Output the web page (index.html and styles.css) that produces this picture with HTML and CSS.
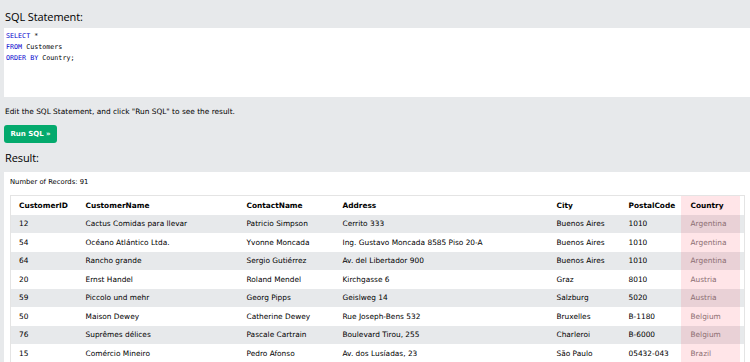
FILE: index.html
```html
<!DOCTYPE html>
<html lang="en">
<head>
    <meta charset="UTF-8">
    <meta name="viewport" content="width=device-width, initial-scale=1.0">
    <title>SQL Tryit Editor</title>
    <link rel="stylesheet" href="styles.css">
</head>
<body>
    <div class="page">
        <h3 class="heading">SQL Statement:</h3>
        <div class="code-box">
            <div><span class="kw">SELECT</span> *</div>
            <div><span class="kw">FROM</span> Customers</div>
            <div><span class="kw">ORDER BY</span> Country;</div>
        </div>
        <p class="hint">Edit the SQL Statement, and click "Run SQL" to see the result.</p>
        <button class="run-btn">Run SQL &raquo;</button>
        <h3 class="heading result-heading">Result:</h3>
        <div class="result">
            <div class="count">Number of Records: 91</div>
            <table class="records">
                <colgroup>
                    <col style="width: 67px">
                    <col style="width: 161px">
                    <col style="width: 96px">
                    <col style="width: 214px">
                    <col style="width: 72px">
                    <col style="width: 60px">
                    <col>
                </colgroup>
                <tr>
                    <th>CustomerID</th>
                    <th>CustomerName</th>
                    <th>ContactName</th>
                    <th>Address</th>
                    <th>City</th>
                    <th>PostalCode</th>
                    <th class="country">Country</th>
                </tr>
                <tr>
                    <td>12</td><td>Cactus Comidas para llevar</td><td>Patricio Simpson</td><td>Cerrito 333</td><td>Buenos Aires</td><td>1010</td><td class="country">Argentina</td>
                </tr>
                <tr>
                    <td>54</td><td>Océano Atlántico Ltda.</td><td>Yvonne Moncada</td><td>Ing. Gustavo Moncada 8585 Piso 20-A</td><td>Buenos Aires</td><td>1010</td><td class="country">Argentina</td>
                </tr>
                <tr>
                    <td>64</td><td>Rancho grande</td><td>Sergio Gutiérrez</td><td>Av. del Libertador 900</td><td>Buenos Aires</td><td>1010</td><td class="country">Argentina</td>
                </tr>
                <tr>
                    <td>20</td><td>Ernst Handel</td><td>Roland Mendel</td><td>Kirchgasse 6</td><td>Graz</td><td>8010</td><td class="country">Austria</td>
                </tr>
                <tr>
                    <td>59</td><td>Piccolo und mehr</td><td>Georg Pipps</td><td>Geislweg 14</td><td>Salzburg</td><td>5020</td><td class="country">Austria</td>
                </tr>
                <tr>
                    <td>50</td><td>Maison Dewey</td><td>Catherine Dewey</td><td>Rue Joseph-Bens 532</td><td>Bruxelles</td><td>B-1180</td><td class="country">Belgium</td>
                </tr>
                <tr>
                    <td>76</td><td>Suprêmes délices</td><td>Pascale Cartrain</td><td>Boulevard Tirou, 255</td><td>Charleroi</td><td>B-6000</td><td class="country">Belgium</td>
                </tr>
                <tr>
                    <td>15</td><td>Comércio Mineiro</td><td>Pedro Afonso</td><td>Av. dos Lusíadas, 23</td><td>São Paulo</td><td>05432-043</td><td class="country">Brazil</td>
                </tr>
            </table>
        </div>
    </div>
</body>
</html>
```

FILE: styles.css
```css
body {
    margin: 0;
    background-color: #e7e9eb;
    font-family: "DejaVu Sans", Verdana, sans-serif;
    overflow: hidden;
}

.page {
    padding: 0 0 0 4px;
}

.heading {
    font-family: "Open Sans", "Noto Sans", sans-serif;
    font-weight: 400;
    font-size: 11px;
    letter-spacing: -0.1px;
    line-height: 18px;
    margin: 0;
    padding: 8px 0 2px 1px;
    color: #000;
}

.code-box {
    background-color: #fff;
    height: 63px;
    padding: 3px 2px;
    font-family: "DejaVu Sans Mono", "Liberation Mono", monospace;
    font-size: 6.7px;
    line-height: 11px;
    color: #000;
}

.kw {
    color: mediumblue;
}

.hint {
    font-size: 7.4px;
    margin: 0;
    padding: 10px 0 8px 1px;
    line-height: 10px;
}

.run-btn {
    display: block;
    width: 53px;
    height: 18px;
    padding: 0;
    border: none;
    border-radius: 3px;
    background-color: #04aa6d;
    color: #fff;
    font-family: "DejaVu Sans", Verdana, sans-serif;
    font-weight: bold;
    font-size: 7px;
    cursor: pointer;
}

.result-heading {
    padding-top: 6px;
    padding-bottom: 5px;
}

.result {
    background-color: #fff;
    padding: 5px 6px 0 6px;
    height: 200px;
}

.count {
    font-size: 6.8px;
    line-height: 10px;
    padding: 0 0 8px 0;
}

.records {
    border-collapse: collapse;
    table-layout: fixed;
    width: 735px;
    border: 1px solid #e4e4e4;
    font-size: 7.4px;
}

.records th,
.records td {
    height: 18.5px;
    padding: 0 0 0 8px;
    text-align: left;
    white-space: nowrap;
    overflow: hidden;
}

.records th {
    font-weight: bold;
}

.records tr:nth-child(even) {
    background-color: #e7e9eb;
}

.records .country {
    padding-left: 10px;
    background-image: linear-gradient(to right, rgba(255, 0, 30, 0.1) 59px, transparent 59px);
}

.records td.country {
    color: #8c6e72;
}
```
